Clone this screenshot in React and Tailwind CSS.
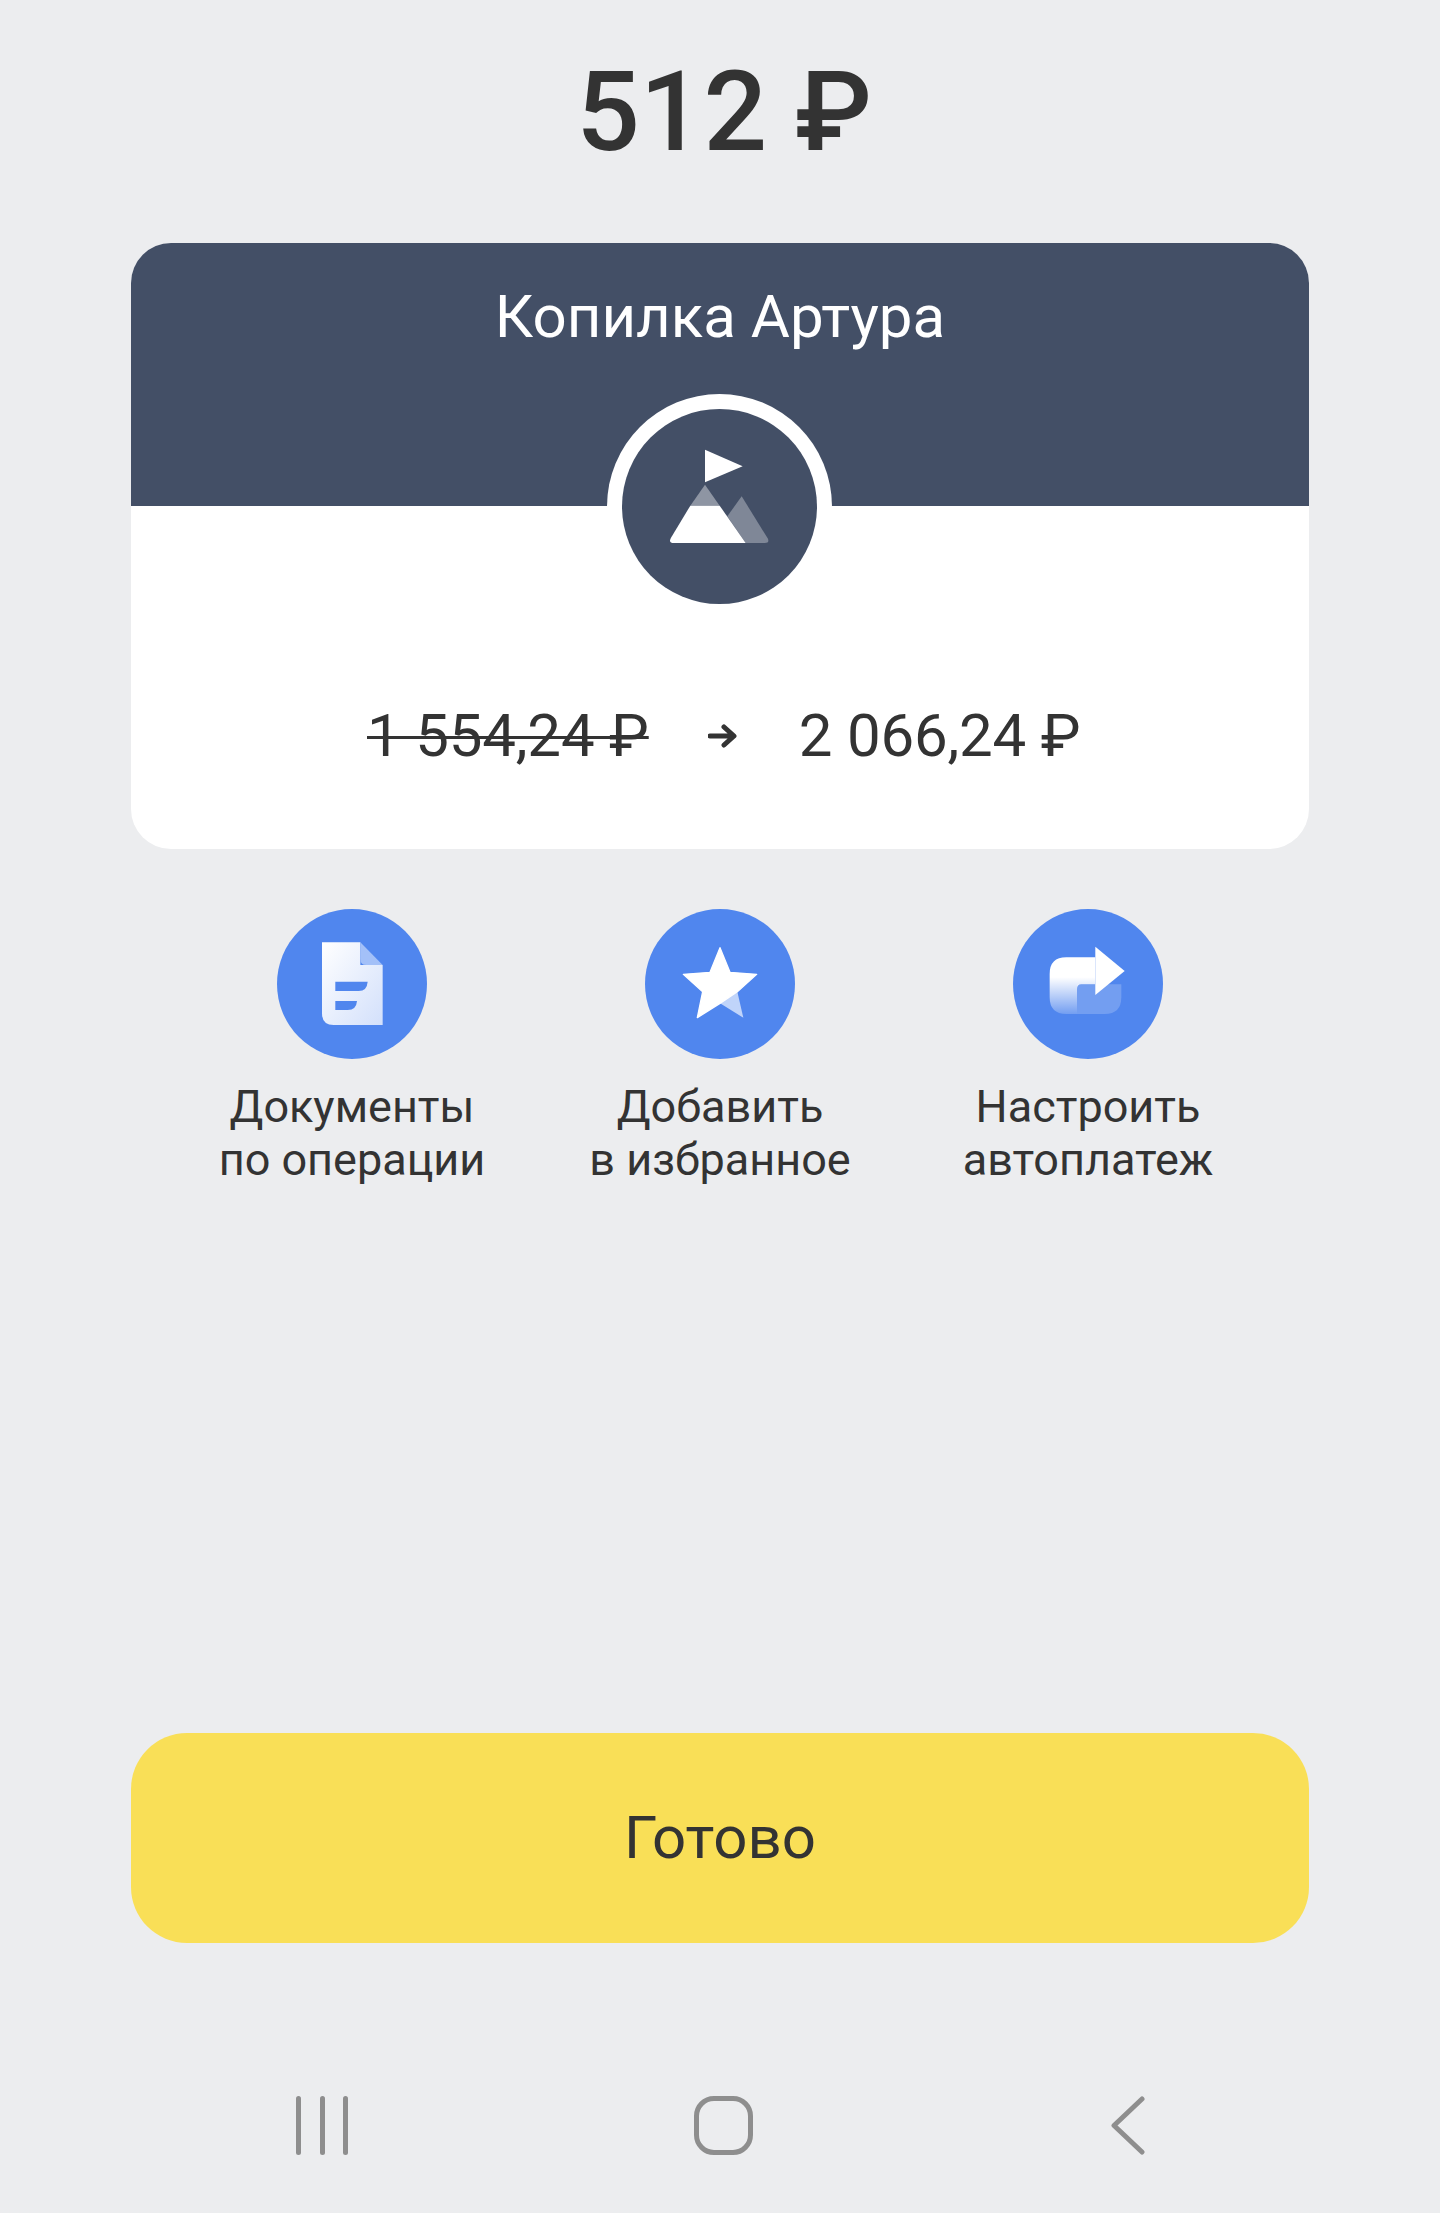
import React from "react";

const actions = [
  { id: "doc", lines: ["Документы", "по операции"] },
  { id: "star", lines: ["Добавить", "в избранное"] },
  { id: "share", lines: ["Настроить", "автоплатеж"] },
];

function MountainIcon() {
  return (
    <svg viewBox="0 0 585 585" className="w-full h-full">
      <path d="M249 122 L362 172 L249 220 Z" fill="#fff" />
      <path d="M359 262 L437 388 Q444 402 428 402 L371 402 L316 322 Z" fill="#fff" fillOpacity="0.32" />
      <path d="M249 227 L293 290 L205 290 Z" fill="#fff" fillOpacity="0.4" />
      <path d="M205 290 L293 290 L371 402 L156 402 Q138 402 147 386 Z" fill="#fff" />
    </svg>
  );
}

function ActionIcon({ id }) {
  if (id === "doc") {
    return (
      <svg viewBox="0 0 450 450" className="w-full h-full">
        <defs>
          <linearGradient id="docFill" x1="0" y1="0" x2="1" y2="1">
            <stop offset="0" stopColor="#ffffff" />
            <stop offset="1" stopColor="#d3e0fb" />
          </linearGradient>
        </defs>
        <path d="M135 100 H250 V168 H317 V348 H170 Q135 348 135 313 Z" fill="url(#docFill)" />
        <path d="M250 100 L317 168 H268 Q250 168 250 150 Z" fill="#a3c0f8" />
        <path d="M175 218 H272 Q270 246 245 246 H175 Z" fill="#5086ee" />
        <path d="M175 276 H240 Q238 303 212 303 H175 Z" fill="#5086ee" />
      </svg>
    );
  }
  if (id === "star") {
    return (
      <svg viewBox="0 0 450 450" className="w-full h-full">
        <path d="M225 283 L277 248 L295 326 Z" fill="#c0d4fa" />
        <path
          d="M225 116 L255 190 L335 196 L277 248 L225 283 L157 326 L173 248 L115 196 L195 190 Z"
          fill="#fff"
          stroke="#fff"
          strokeWidth="4"
          strokeLinejoin="round"
        />
      </svg>
    );
  }
  return (
    <svg viewBox="0 0 450 450" className="w-full h-full">
      <defs>
        <linearGradient id="bodyFill" x1="0" y1="0" x2="0" y2="1">
          <stop offset="0.35" stopColor="#ffffff" />
          <stop offset="1" stopColor="#ffffff" stopOpacity="0.2" />
        </linearGradient>
      </defs>
      <path d="M192 226 H325 V265 Q325 315 275 315 H192 Z" fill="#fff" fillOpacity="0.2" />
      <path d="M160 145 H247 V226 H205 Q192 226 192 240 V315 H160 Q110 315 110 265 V195 Q110 145 160 145 Z" fill="url(#bodyFill)" />
      <path d="M247 113 L335 186 L247 258 Z" fill="#fff" />
    </svg>
  );
}

export default function App() {
  return (
    <div className="min-h-[2213px] bg-[#ecedef] text-[#333333] font-['Roboto',sans-serif] flex flex-col">
      <h1 className="pt-[47px] pl-[8px] h-[243px] text-center text-[112px] leading-[130px] font-medium">
        512 ₽
      </h1>

      <div className="mx-[131px] h-[606px] rounded-[40px] bg-white overflow-hidden relative">
        <div className="h-[263px] bg-[#434f66] pt-[44px] text-center text-white text-[60px] leading-[60px]">
          Копилка Артура
        </div>
        <div className="absolute left-[476px] top-[151px] w-[225px] h-[225px] rounded-full bg-white flex items-center justify-center">
          <div className="w-[195px] h-[195px] rounded-full bg-[#434f66]">
            <MountainIcon />
          </div>
        </div>
        <div className="pt-[195px] pl-[236px] flex items-center text-[60px] leading-[70px] tracking-[-0.2px]">
          <span className="line-through decoration-[3px]">1 554,24 ₽</span>
          <svg viewBox="0 0 29 24" className="ml-[59px] mr-[62px] w-[29px] h-[24px]">
            <path d="M2 12 H25 M16 3 L26 12 L16 21" fill="none" stroke="#333333" strokeWidth="5" strokeLinecap="round" strokeLinejoin="round" />
          </svg>
          <span>2 066,24 ₽</span>
        </div>
      </div>

      <div className="mt-[60px] pl-[168px] flex">
        {actions.map((item) => (
          <div key={item.id} className="w-[368px] flex flex-col items-center">
            <div className="w-[150px] h-[150px] rounded-full bg-[#5086ee]">
              <ActionIcon id={item.id} />
            </div>
            <div className="mt-[21px] text-center text-[45px] leading-[53px]">
              {item.lines.map((line) => (
                <div key={line}>{line}</div>
              ))}
            </div>
          </div>
        ))}
      </div>

      <button className="mt-[547px] mx-[131px] h-[210px] rounded-[56px] bg-[#f9df57] text-[60px]">
        Готово
      </button>

      <div className="mt-[153px] pl-[296px] flex items-center">
        <div className="w-[52px] h-[59px] flex justify-between">
          <div className="w-[5px] h-full rounded-full bg-[#8e8e8e]" />
          <div className="w-[5px] h-full rounded-full bg-[#8e8e8e]" />
          <div className="w-[5px] h-full rounded-full bg-[#8e8e8e]" />
        </div>
        <div className="ml-[346px] w-[59px] h-[59px] rounded-[20px] border-[5px] border-[#8e8e8e]" />
        <svg viewBox="0 0 34 59" className="ml-[358px] w-[34px] h-[59px]">
          <path d="M31 3 L3 29.5 L31 56" fill="none" stroke="#8e8e8e" strokeWidth="5" strokeLinecap="round" strokeLinejoin="round" />
        </svg>
      </div>
    </div>
  );
}
